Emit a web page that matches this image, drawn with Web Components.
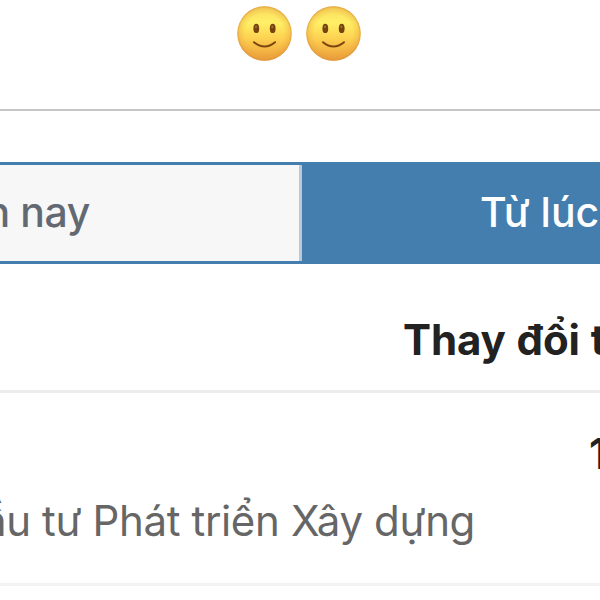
<!DOCTYPE html>
<html lang="vi">
<head>
<meta charset="utf-8">
<title>Thay đổi</title>
<style>
  body {
    margin: 0;
    width: 600px;
    height: 600px;
    overflow: hidden;
    background: #fff;
    font-family: Inter, "Liberation Sans", sans-serif;
  }
</style>
</head>
<body>
<stock-page></stock-page>
<script>
class SmileFace extends HTMLElement {
  constructor() {
    super();
    this.attachShadow({ mode: "open" });
    this.shadowRoot.innerHTML = `
      <style>
        :host { display: block; width: 55px; height: 55px; }
        svg { display: block; }
      </style>
      <svg width="55" height="55" viewBox="0 0 55 55">
        <defs>
          <linearGradient id="skin" x1="0" y1="0" x2="0" y2="1">
            <stop offset="0" stop-color="#f9dc60"/>
            <stop offset=".3" stop-color="#fff066"/>
            <stop offset=".6" stop-color="#fdd050"/>
            <stop offset="1" stop-color="#ec9c3a"/>
          </linearGradient>
          <radialGradient id="rim">
            <stop offset=".7" stop-color="#e79a35" stop-opacity="0"/>
            <stop offset=".92" stop-color="#e39a38" stop-opacity=".3"/>
            <stop offset="1" stop-color="#d98f3c" stop-opacity=".75"/>
          </radialGradient>
        </defs>
        <circle cx="27.5" cy="27.5" r="27.2" fill="url(#skin)"/>
        <circle cx="27.5" cy="27.5" r="27.2" fill="url(#rim)"/>
        <ellipse cx="19.3" cy="22.4" rx="2.9" ry="4.7" fill="#75430f"/>
        <ellipse cx="35.7" cy="22.4" rx="2.9" ry="4.7" fill="#75430f"/>
        <ellipse cx="19" cy="20.8" rx="1" ry="1.4" fill="#a3702c"/>
        <ellipse cx="35.4" cy="20.8" rx="1" ry="1.4" fill="#a3702c"/>
        <path d="M17 36.2 Q27.5 44.8 38 36.2" fill="none" stroke="#7c470f" stroke-width="2" stroke-linecap="round"/>
      </svg>
    `;
  }
}

class PeriodTabs extends HTMLElement {
  constructor() {
    super();
    this.attachShadow({ mode: "open" });
    this.shadowRoot.innerHTML = `
      <style>
        :host {
          display: flex;
          box-sizing: border-box;
          height: 102px;
          border-top: 3px solid #437eaf;
          border-bottom: 3px solid #437eaf;
          font-size: 41px;
          font-weight: 500;
          white-space: nowrap;
          overflow: hidden;
        }
        .tab {
          display: flex;
          align-items: center;
          box-sizing: border-box;
          padding-bottom: 2px;
        }
        .off {
          width: 302px;
          justify-content: flex-end;
          padding-right: 209px;
          border-right: 3px solid #b9c9d8;
          background: #f7f7f7;
          color: #636973;
          letter-spacing: -0.4px;
        }
        .on {
          flex: 1;
          min-width: 0;
          padding-left: 178px;
          background: #437eaf;
          color: #fff;
        }
      </style>
      <div class="tab off"><slot name="off"></slot></div>
      <div class="tab on"><slot name="on"></slot></div>
    `;
  }
}

class ColumnHead extends HTMLElement {
  constructor() {
    super();
    this.attachShadow({ mode: "open" });
    this.shadowRoot.innerHTML = `
      <style>
        :host {
          display: block;
          box-sizing: border-box;
          height: 129px;
          padding: 51px 0 0 403px;
          border-bottom: 3px solid #ededed;
          font-size: 42px;
          font-weight: 700;
          letter-spacing: -0.1px;
          word-spacing: 1px;
          line-height: 50px;
          color: #222;
          white-space: nowrap;
          overflow: hidden;
        }
      </style>
      <slot></slot>
    `;
  }
}

class StockRow extends HTMLElement {
  constructor() {
    super();
    this.attachShadow({ mode: "open" });
    this.shadowRoot.innerHTML = `
      <style>
        :host {
          display: block;
          box-sizing: border-box;
          height: 193px;
          padding-top: 36px;
          border-bottom: 3px solid #f3f3f3;
          font-size: 42px;
          line-height: 50px;
          white-space: nowrap;
          overflow: hidden;
        }
        .value {
          padding-left: 589px;
          font-weight: 600;
          color: #222;
        }
        .name {
          display: flex;
          justify-content: flex-end;
          margin-top: 17px;
          padding-right: 125px;
          letter-spacing: -0.36px;
          color: #666;
        }
      </style>
      <div class="value"><slot name="value"></slot></div>
      <div class="name"><slot></slot></div>
    `;
  }
}

class StockPage extends HTMLElement {
  constructor() {
    super();
    this.attachShadow({ mode: "open" });
    this.shadowRoot.innerHTML = `
      <style>
        :host { display: block; }
        .faces {
          display: flex;
          justify-content: center;
          gap: 14px;
          box-sizing: border-box;
          height: 111px;
          padding: 6px 3px 0 0;
          border-bottom: 2px solid #c6c6c6;
        }
        period-tabs { margin-top: 51px; }
      </style>
      <div class="faces">
        <smile-face></smile-face>
        <smile-face></smile-face>
      </div>
      <period-tabs>
        <span slot="off">n nay</span>
        <span slot="on">Từ lúc</span>
      </period-tabs>
      <column-head>Thay đổi t</column-head>
      <stock-row>
        <span slot="value">1</span>
        ầu tư Phát triển Xây dựng
      </stock-row>
    `;
  }
}

customElements.define("smile-face", SmileFace);
customElements.define("period-tabs", PeriodTabs);
customElements.define("column-head", ColumnHead);
customElements.define("stock-row", StockRow);
customElements.define("stock-page", StockPage);
</script>
</body>
</html>
